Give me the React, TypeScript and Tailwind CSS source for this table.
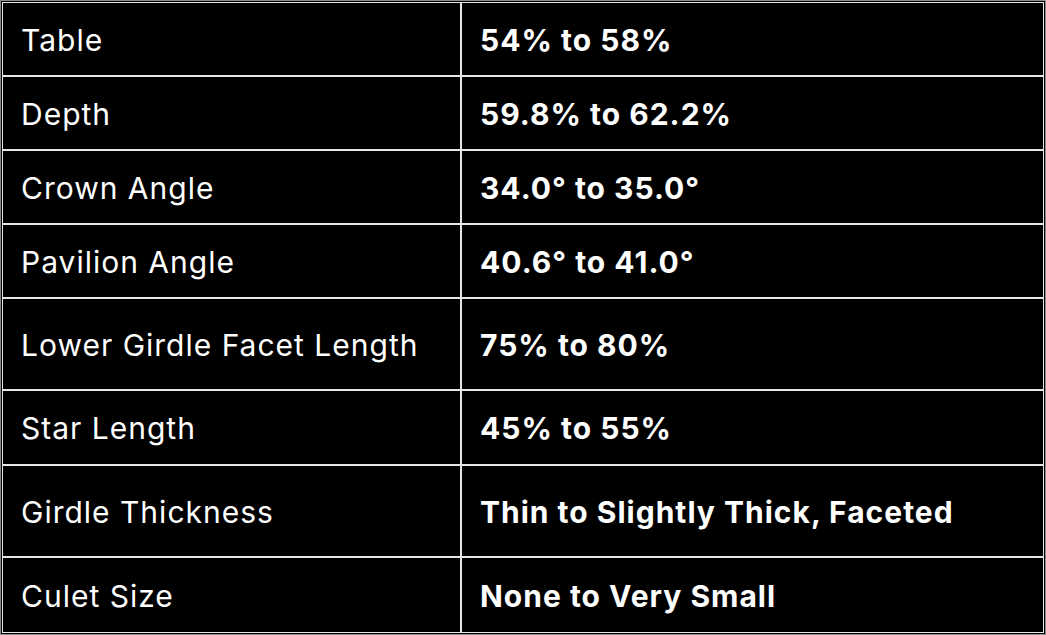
const rows: { label: string; value: string; h: string }[] = [
  { label: "Table", value: "54% to 58%", h: "h-[74px]" },
  { label: "Depth", value: "59.8% to 62.2%", h: "h-[74px]" },
  { label: "Crown Angle", value: "34.0° to 35.0°", h: "h-[74px]" },
  { label: "Pavilion Angle", value: "40.6° to 41.0°", h: "h-[74px]" },
  { label: "Lower Girdle Facet Length", value: "75% to 80%", h: "h-[92px]" },
  { label: "Star Length", value: "45% to 55%", h: "h-[75px]" },
  { label: "Girdle Thickness", value: "Thin to Slightly Thick, Faceted", h: "h-[92px]" },
  { label: "Culet Size", value: "None to Very Small", h: "h-[76px]" },
];

export default function App() {
  return (
    <div className="w-[1046px] h-[635px] border border-[#8c8c8c] bg-black p-px font-['Inter',sans-serif] text-white">
      <div className="grid grid-cols-[459px_583px]">
        {rows.map((r) => (
          <div key={r.label} className="contents">
            <div className={`${r.h} flex items-center border border-[#e6e6e6] pl-[18px] pt-[2px] text-[30px] tracking-[1px]`}>
              {r.label}
            </div>
            <div className={`${r.h} flex items-center border border-[#e6e6e6] pl-[18px] pt-[2px] text-[30px] font-bold tracking-[1px]`}>
              {r.value}
            </div>
          </div>
        ))}
      </div>
    </div>
  );
}
